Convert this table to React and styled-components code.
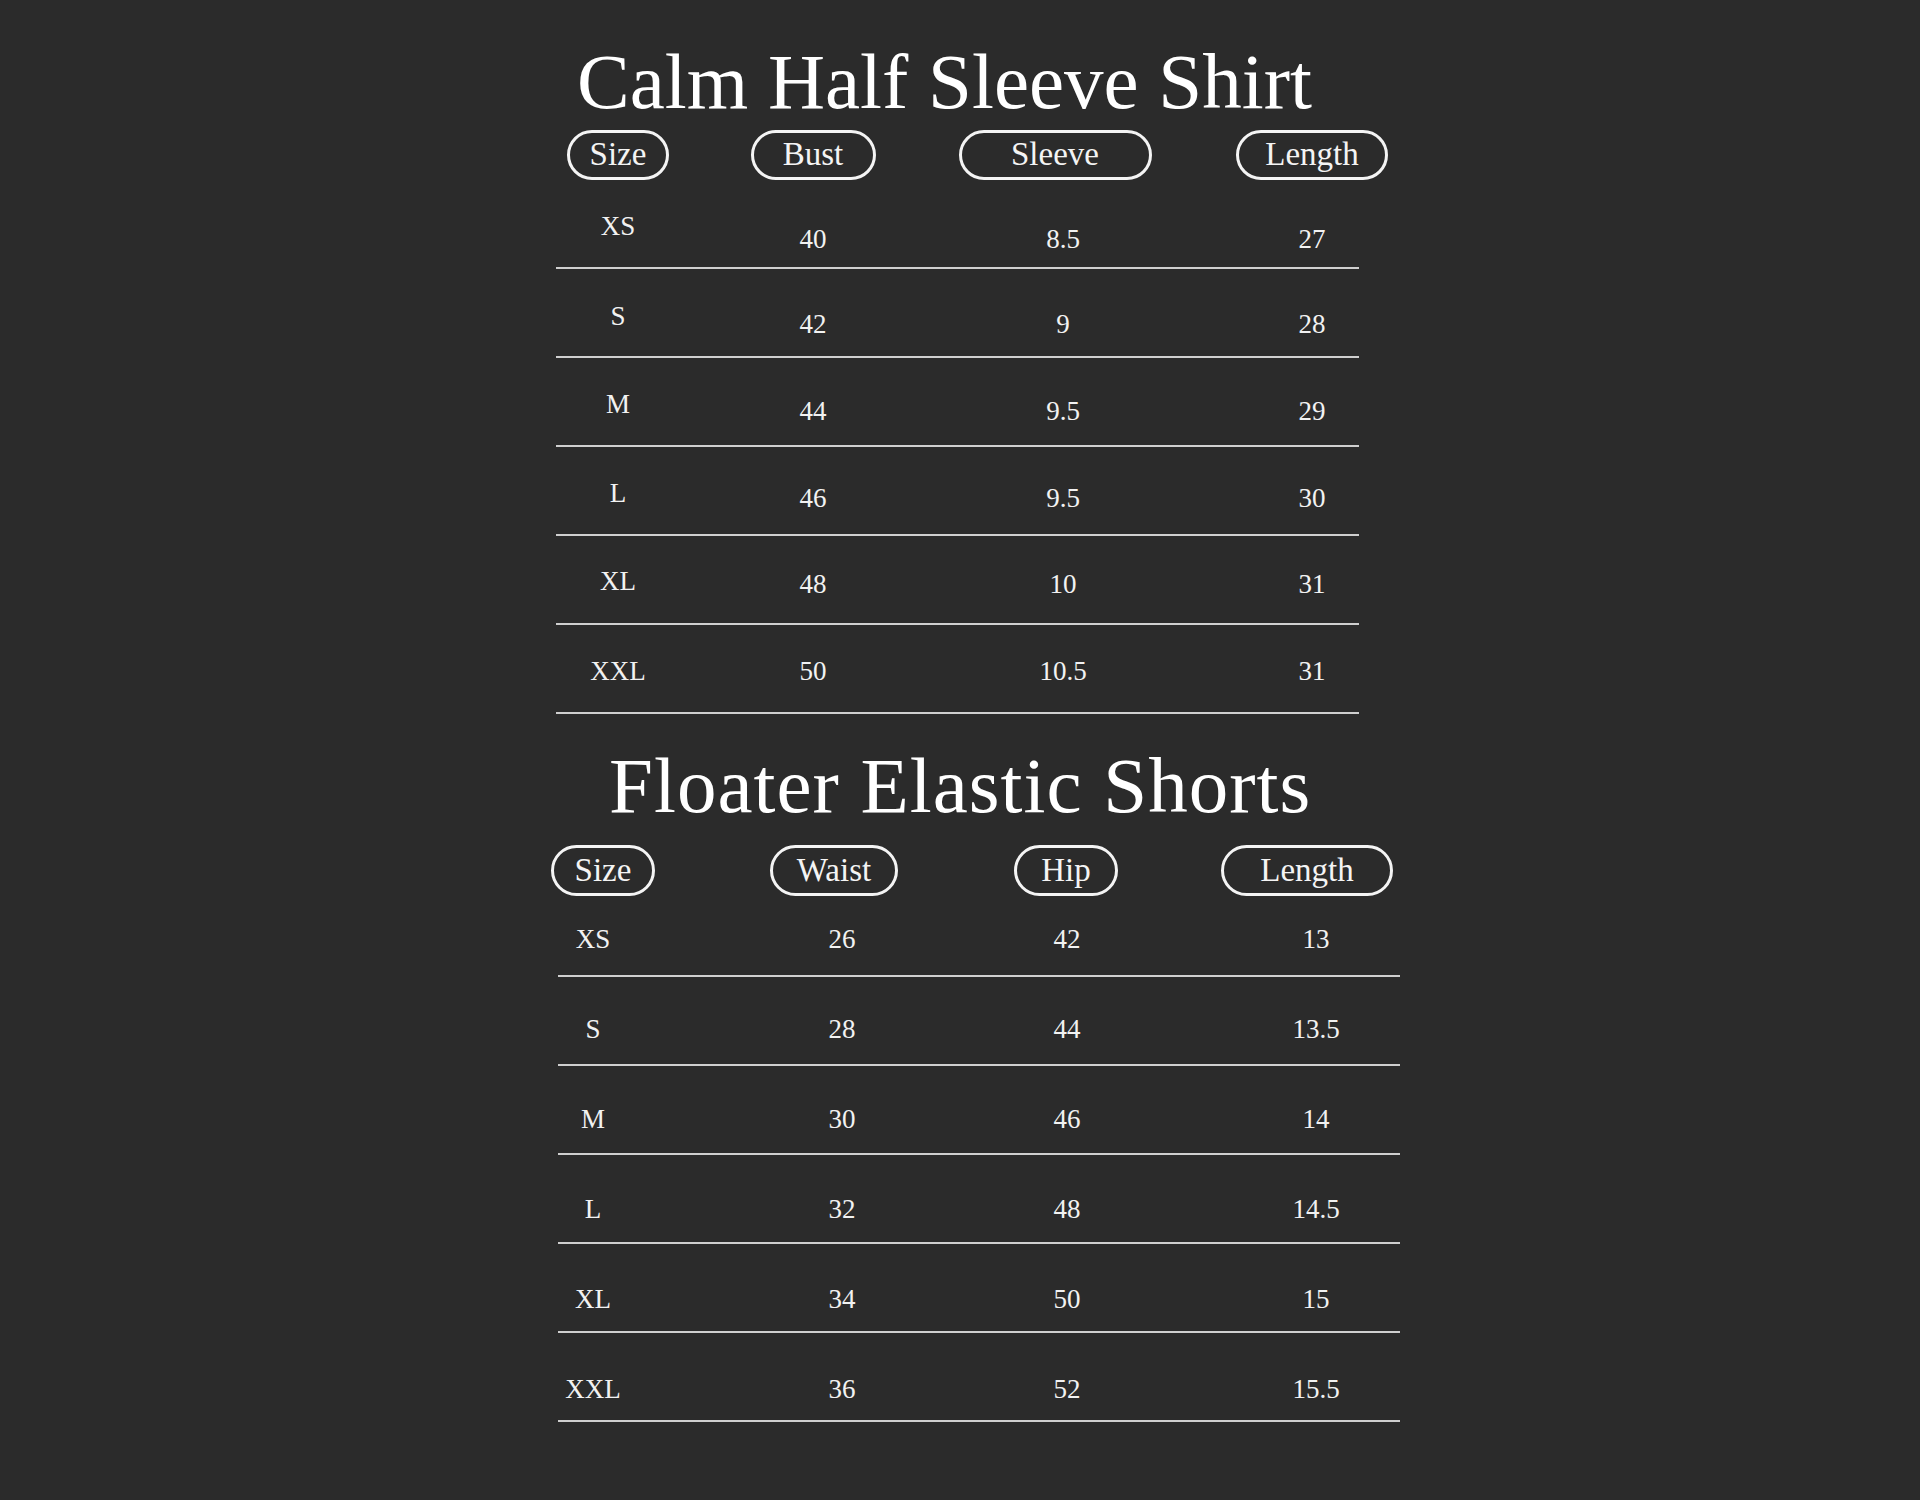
import React from "react";
import styled, { createGlobalStyle } from "styled-components";

const GlobalStyle = createGlobalStyle`
  html, body {
    margin: 0;
    padding: 0;
    background: #2b2b2b;
  }
  body {
    font-family: "Liberation Serif", "Times New Roman", serif;
    color: #f2f2f2;
  }
`;

const Page = styled.main`
  min-height: 1500px;
  box-sizing: border-box;
  padding-top: 42px;
  display: flex;
  flex-direction: column;
  align-items: flex-start;
  background: #2b2b2b;
`;

const Section = styled.section`
  display: flex;
  flex-direction: column;
  align-items: flex-start;
  margin-left: ${(p) => p.$left}px;
  margin-top: ${(p) => p.$top}px;
`;

const Title = styled.h1`
  margin: 0 0 0 ${(p) => p.$indent}px;
  font-family: "Liberation Serif", "Times New Roman", serif;
  font-weight: 400;
  font-size: 79px;
  line-height: 79px;
  letter-spacing: ${(p) => p.$spacing}px;
  color: #ffffff;
  white-space: nowrap;
`;

const Grid = styled.div`
  display: grid;
  grid-template-columns: ${(p) => p.$cols};
  justify-items: center;
`;

const HeaderRow = styled(Grid)`
  margin-top: ${(p) => p.$top}px;
  align-items: center;
`;

const Pill = styled.div`
  box-sizing: border-box;
  width: ${(p) => p.$w}px;
  height: ${(p) => p.$h}px;
  border: 3px solid #f4f4f4;
  border-radius: 26px;
  display: flex;
  align-items: center;
  justify-content: center;
  padding-bottom: 1px;
  font-size: 33px;
  line-height: 33px;
  color: #f4f4f4;
  margin-left: ${(p) => (p.$shift > 0 ? 2 * p.$shift : 0)}px;
  margin-right: ${(p) => (p.$shift < 0 ? -2 * p.$shift : 0)}px;
`;

const Row = styled(Grid)`
  height: ${(p) => p.$h}px;
  align-items: start;
`;

const Cell = styled.div`
  padding-top: ${(p) => p.$top}px;
  font-size: 27px;
  line-height: 28px;
  color: #f2f2f2;
  white-space: nowrap;
`;

const Rule = styled.div`
  height: 2px;
  width: ${(p) => p.$w}px;
  margin-left: ${(p) => p.$left}px;
  background: #cfcfcf;
`;

const tables = [
  {
    title: "Calm Half Sleeve Shirt",
    left: 556,
    top: 0,
    titleIndent: 21,
    spacing: 0,
    headerTop: 9,
    pillH: 50,
    cols: "124px 266px 234px 264px",
    ruleLeft: 0,
    ruleWidth: 803,
    headers: [
      { label: "Size", w: 102, shift: 0 },
      { label: "Bust", w: 125, shift: 0 },
      { label: "Sleeve", w: 193, shift: -8 },
      { label: "Length", w: 152, shift: 0 },
    ],
    rows: [
      { h: 87, sizeTop: 32, top: 45, cells: ["XS", "40", "8.5", "27"] },
      { h: 87, sizeTop: 33, top: 41, cells: ["S", "42", "9", "28"] },
      { h: 87, sizeTop: 32, top: 39, cells: ["M", "44", "9.5", "29"] },
      { h: 87, sizeTop: 32, top: 37, cells: ["L", "46", "9.5", "30"] },
      { h: 87, sizeTop: 31, top: 34, cells: ["XL", "48", "10", "31"] },
      { h: 87, sizeTop: 32, top: 32, cells: ["XXL", "50", "10.5", "31"] },
    ],
  },
  {
    title: "Floater Elastic Shorts",
    left: 494,
    top: 32,
    titleIndent: 115,
    spacing: 1,
    headerTop: 20,
    pillH: 51,
    cols: "198px 300px 150px 348px",
    ruleLeft: 64,
    ruleWidth: 842,
    headers: [
      { label: "Size", w: 104, shift: 10 },
      { label: "Waist", w: 128, shift: -8 },
      { label: "Hip", w: 104, shift: -1 },
      { label: "Length", w: 172, shift: -9 },
    ],
    rows: [
      { h: 79, top: 29, cells: ["XS", "26", "42", "13"] },
      { h: 87, top: 38, cells: ["S", "28", "44", "13.5"] },
      { h: 87, top: 39, cells: ["M", "30", "46", "14"] },
      { h: 87, top: 40, cells: ["L", "32", "48", "14.5"] },
      { h: 87, top: 41, cells: ["XL", "34", "50", "15"] },
      { h: 87, top: 42, cells: ["XXL", "36", "52", "15.5"] },
    ],
  },
];

function SizeTable({ t }) {
  return (
    <Section $left={t.left} $top={t.top}>
      <Title $indent={t.titleIndent} $spacing={t.spacing}>
        {t.title}
      </Title>
      <HeaderRow $cols={t.cols} $top={t.headerTop}>
        {t.headers.map((h) => (
          <Pill key={h.label} $w={h.w} $h={t.pillH} $shift={h.shift}>
            {h.label}
          </Pill>
        ))}
      </HeaderRow>
      {t.rows.map((r, i) => (
        <React.Fragment key={i}>
          <Row $cols={t.cols} $h={r.h}>
            {r.cells.map((c, j) => (
              <Cell
                key={j}
                $top={j === 0 && r.sizeTop !== undefined ? r.sizeTop : r.top}
              >
                {c}
              </Cell>
            ))}
          </Row>
          <Rule $w={t.ruleWidth} $left={t.ruleLeft} />
        </React.Fragment>
      ))}
    </Section>
  );
}

export default function App() {
  return (
    <>
      <GlobalStyle />
      <Page>
        {tables.map((t) => (
          <SizeTable key={t.title} t={t} />
        ))}
      </Page>
    </>
  );
}
